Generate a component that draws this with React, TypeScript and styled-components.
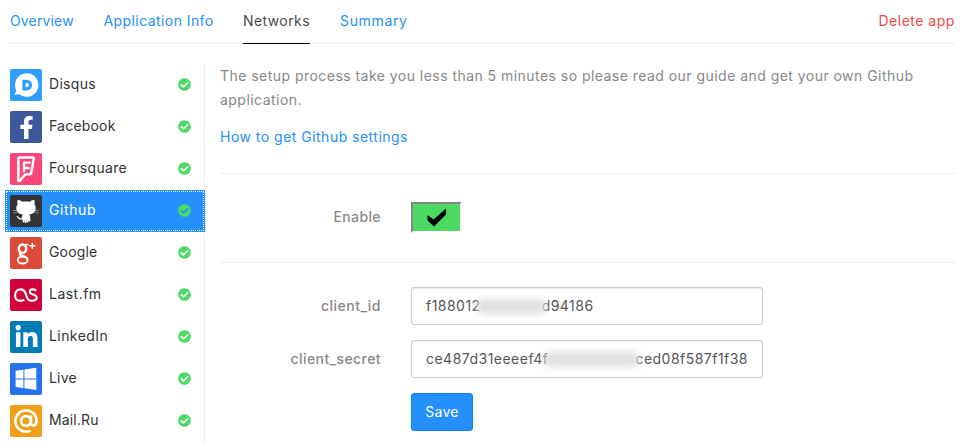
import React from "react";
import styled, { createGlobalStyle } from "styled-components";
import { FaFacebookF, FaLinkedinIn, FaCheckCircle } from "react-icons/fa";

const GlobalStyle = createGlobalStyle`
  * { box-sizing: border-box; }
  body {
    margin: 0;
    background: #fff;
    color: #333;
    font: 14px/24px Inter, "Noto Sans", sans-serif;
    overflow: hidden;
  }
`;

const Page = styled.div`
  height: 444px;
  padding: 0 11px 0 10px;
  overflow: hidden;
`;

const Tabs = styled.nav`
  display: flex;
  gap: 30px;
  height: 44px;
  border-bottom: 1px solid #eee;
`;

const Tab = styled.a<{ $width: number; $spacing: number; $active?: boolean; $danger?: boolean }>`
  width: ${(p) => p.$width}px;
  height: 44px;
  padding-top: 9px;
  white-space: nowrap;
  letter-spacing: ${(p) => p.$spacing}px;
  color: ${(p) => (p.$danger ? "#f04848" : p.$active ? "#4a4a4a" : "#2490f8")};
  border-bottom: 1px solid ${(p) => (p.$active ? "#000" : "transparent")};
  margin-left: ${(p) => (p.$danger ? "auto" : "0")};
`;

const Body = styled.div`
  display: flex;
  margin-top: 20px;
  height: 380px;
`;

const Sidebar = styled.aside`
  width: 200px;
  flex: none;
  margin-left: -5px;
  border-right: 1px solid #eee;
`;

const Item = styled.div<{ $active?: boolean }>`
  display: flex;
  align-items: center;
  width: 200px;
  height: 42px;
  padding: 0 14px 0 5px;
  background: ${(p) => (p.$active ? "#2490fc" : "transparent")};
  color: ${(p) => (p.$active ? "#fff" : "#333")};
  outline: ${(p) => (p.$active ? "1px dotted #fff" : "none")};
  outline-offset: -2px;
`;

const Logo = styled.span<{ $color: string }>`
  display: flex;
  align-items: center;
  justify-content: center;
  width: 32px;
  height: 32px;
  border-radius: 2px;
  color: #fff;
  background: ${(p) => p.$color};
`;

const Name = styled.span<{ $spacing: number }>`
  flex: 1;
  padding: 0 0 2px 7px;
  letter-spacing: ${(p) => p.$spacing}px;
`;

const Done = styled(FaCheckCircle)`
  width: 13px;
  height: 13px;
  margin-bottom: 1px;
  color: #4cd964;
`;

const Main = styled.main`
  flex: 1;
  padding-left: 15px;
`;

const Intro = styled.p`
  margin: 0 0 13px;
  color: #888;
  letter-spacing: 0.46px;
`;

const Guide = styled.a`
  display: block;
  height: 24px;
  margin-bottom: 24px;
  color: #2490f8;
  letter-spacing: 0.48px;
`;

const Section = styled.section<{ $top: number; $height: number }>`
  display: flex;
  flex-direction: column;
  gap: 15px;
  height: ${(p) => p.$height}px;
  padding-top: ${(p) => p.$top}px;
  border-top: 1px solid #eee;
`;

const Row = styled.div`
  display: flex;
  align-items: center;
`;

const Label = styled.label<{ $spacing: number; $lift?: number }>`
  width: 161px;
  margin-right: 30px;
  padding-bottom: ${(p) => p.$lift ?? 0}px;
  text-align: right;
  font-weight: 500;
  color: #888;
  letter-spacing: ${(p) => p.$spacing}px;
`;

const Toggle = styled.span`
  display: flex;
  align-items: center;
  justify-content: center;
  width: 51px;
  height: 31px;
  border: 2px solid;
  border-color: #858585 #fff #fff #858585;
  background: #4cd964;
  background-clip: padding-box;
`;

const Field = styled.div`
  display: flex;
  align-items: center;
  width: 352px;
  height: 38px;
  padding: 0 14px;
  border: 1px solid #ccc;
  border-radius: 3px;
  box-shadow: inset 0 1px 1px rgba(0, 0, 0, 0.075);
  color: #555;
  letter-spacing: 0.48px;
`;

const Smudge = styled.span<{ $width: number }>`
  width: ${(p) => p.$width}px;
  height: 15px;
  margin: 0 -4px;
  border-radius: 5px;
  background: #e0e0e0;
  filter: blur(3.5px);
`;

const Save = styled.button`
  width: 62px;
  height: 38px;
  margin-left: 191px;
  padding: 0;
  border: 1px solid #0b84fb;
  border-radius: 3px;
  background: #2490fc;
  color: #fff;
  font: inherit;
  letter-spacing: 0.3px;
`;

const Mark = ({ children }: { children: React.ReactNode }) => (
  <svg width="32" height="32" viewBox="0 0 32 32" fill="none" stroke="#fff" strokeLinejoin="round">
    {children}
  </svg>
);

const DisqusMark = () => (
  <Mark>
    <path d="M16.7 4.200a11.800 11.800 0 1 1-7.600 20.900L4.500 26l1.800-4.600A11.800 11.800 0 0 1 16.700 4.200Z" fill="#fff" stroke="none" />
    <path d="M14 12.400h2.800a3.700 3.700 0 0 1 0 7.400H14Z" stroke="#2e9fff" strokeWidth="3.2" strokeLinejoin="miter" />
  </Mark>
);

const FoursquareMark = () => (
  <Mark>
    <path d="M9.500 4.500h13.300q1.300 0 1 1.300l-2.700 14.400q-.2 1-1.300 1h-3.600q-.7 0-1.200.6l-5 5.700q-1.700 1.300-1.700-.6V5.800q0-1.300 1.200-1.300Z" strokeWidth="2.5" />
    <path d="M20.500 9.700h-6.500v9.500M19.500 15h-5" strokeWidth="2.300" />
  </Mark>
);

const OctocatMark = () => (
  <Mark>
    <path
      d="M7.800 4.800c1.700 0 3.200 1 4.400 2 2.500-.5 5.100-.5 7.600 0 1.200-1 2.700-2 4.400-2 .7 1.700.6 3.200.2 4.500 1.100 1.500 1.500 3.100 1.200 5-.5 3.500-2.900 4.800-6.400 5.200.7.900 1 1.700 1 2.900l.2 3.800-1.700.2-.3-2.500V27l-1.500.7-.3-3.200-.3 3.500h-1.500l-.2-3.500-.4 3.200-1.500-.8-.2-2.500-1.700.2c-1.600 0-2.600-1-3.300-2.200-.4-.7-.9-1.100-1.500-1.400 1.400-.3 2.300.4 2.900 1.300.7 1 1.500 1.100 2.800.7.200-1.300.5-2.600 1.100-3.500-3.500-.4-5.900-1.700-6.400-5.200-.3-1.900.1-3.500 1.200-5-.4-1.300-.5-2.800.2-4.500Z"
      fill="#fff"
      stroke="none"
    />
    <path d="M3 15.500h4M25 15.500h4M3.500 18l3.500-.7M28.500 18l-3.500-.7" stroke="#aaa" strokeWidth=".7" />
  </Mark>
);

const GoogleMark = () => (
  <Mark>
    <ellipse cx="12.500" cy="11.700" rx="3.700" ry="4.200" strokeWidth="2.400" />
    <ellipse cx="12.700" cy="23" rx="4.900" ry="3.500" strokeWidth="1.800" />
    <path d="M12.500 7.600h6" strokeWidth="1.500" />
    <path d="M10.500 15.800c-1.700 1.500-.4 2.200 2.500 3.200 2 .7 4 1.400 4.500 3.200" strokeWidth="2" />
    <path d="M22.300 5.700v6M19.300 8.700h6" strokeWidth="1.500" />
  </Mark>
);

const LastfmMark = () => (
  <Mark>
    <path
      d="M14.300 20.600c-1 .8-2.400 1.200-3.900 1.200-3.300 0-5.300-2.300-5.300-5.600s2.200-5.800 5.400-5.800c3 0 4.300 1.600 5.200 4.300l1.100 3.300c.8 2.500 2.200 3.800 5.200 3.800 2.900 0 4.700-1.100 4.700-3.200 0-2-1.400-2.600-3.600-3.200-2.100-.5-3.300-1-3.300-2.600 0-1.500 1.200-2.400 3.100-2.400 1.500 0 2.600.5 3.200 1.500"
      strokeWidth="2.100"
    />
  </Mark>
);

const WindowsMark = () => (
  <Mark>
    <path d="M5.600 7.800 13.400 6.700v8.700H5.600ZM14.400 6.500 26.300 4.800v10.600H14.400ZM5.600 16.400h7.800v8.700l-7.800-1.100ZM14.400 16.400h11.900V27l-11.900-1.700Z" fill="#fff" stroke="none" />
  </Mark>
);

const AtMark = () => (
  <Mark>
    <circle cx="16" cy="16" r="4.900" strokeWidth="2.700" />
    <path d="M21 10.500v7.300c0 4 5.600 3.600 5.600-2A10.600 10.600 0 1 0 20.500 25.600" strokeWidth="2.600" />
  </Mark>
);

const networks = [
  { name: "Disqus", color: "#2e9fff", spacing: 0.3, logo: <DisqusMark /> },
  { name: "Facebook", color: "#3b5998", spacing: 0.2, logo: <FaFacebookF size={23} /> },
  { name: "Foursquare", color: "#fa4778", spacing: 0.3, logo: <FoursquareMark /> },
  { name: "Github", color: "#333", spacing: 0.6, logo: <OctocatMark />, active: true },
  { name: "Google", color: "#dc4b38", spacing: 0.15, logo: <GoogleMark /> },
  { name: "Last.fm", color: "#d0003a", spacing: 0.47, logo: <LastfmMark /> },
  { name: "LinkedIn", color: "#007bb6", spacing: 0.42, logo: <FaLinkedinIn size={25} /> },
  { name: "Live", color: "#2672ec", spacing: 0.2, logo: <WindowsMark /> },
  { name: "Mail.Ru", color: "#ef9f1a", spacing: 0.15, logo: <AtMark /> },
];

export default function App() {
  return (
    <Page>
      <GlobalStyle />
      <Tabs>
        <Tab $width={63.5} $spacing={0.15}>Overview</Tab>
        <Tab $width={109.5} $spacing={0.42}>Application Info</Tab>
        <Tab $width={67} $spacing={0.41} $active>Networks</Tab>
        <Tab $width={67} $spacing={0.65}>Summary</Tab>
        <Tab $width={76.5} $spacing={0.5} $danger>Delete app</Tab>
      </Tabs>
      <Body>
        <Sidebar>
          {networks.map((n) => (
            <Item key={n.name} $active={n.active}>
              <Logo $color={n.color}>{n.logo}</Logo>
              <Name $spacing={n.spacing}>{n.name}</Name>
              <Done />
            </Item>
          ))}
        </Sidebar>
        <Main>
          <Intro>
            The setup process take you less than 5 minutes so please read our guide and get your own Github
            application.
          </Intro>
          <Guide>How to get Github settings</Guide>
          <Section $top={28} $height={89}>
            <Row>
              <Label $spacing={0.4} $lift={2}>Enable</Label>
              <Toggle>
                <svg width="20" height="19" viewBox="0 0 20 19">
                  <path d="M.5 7 6.500 11.500 19 .5v6L7 18.500.5 12.500Z" />
                </svg>
              </Toggle>
            </Row>
          </Section>
          <Section $top={24} $height={181}>
            <Row>
              <Label $spacing={0.5}>client_id</Label>
              <Field>f188012<Smudge $width={69} />d94186</Field>
            </Row>
            <Row>
              <Label $spacing={0.42}>client_secret</Label>
              <Field>ce487d31eeeef4f<Smudge $width={96} />ced08f587f1f38</Field>
            </Row>
            <Save>Save</Save>
          </Section>
        </Main>
      </Body>
    </Page>
  );
}
